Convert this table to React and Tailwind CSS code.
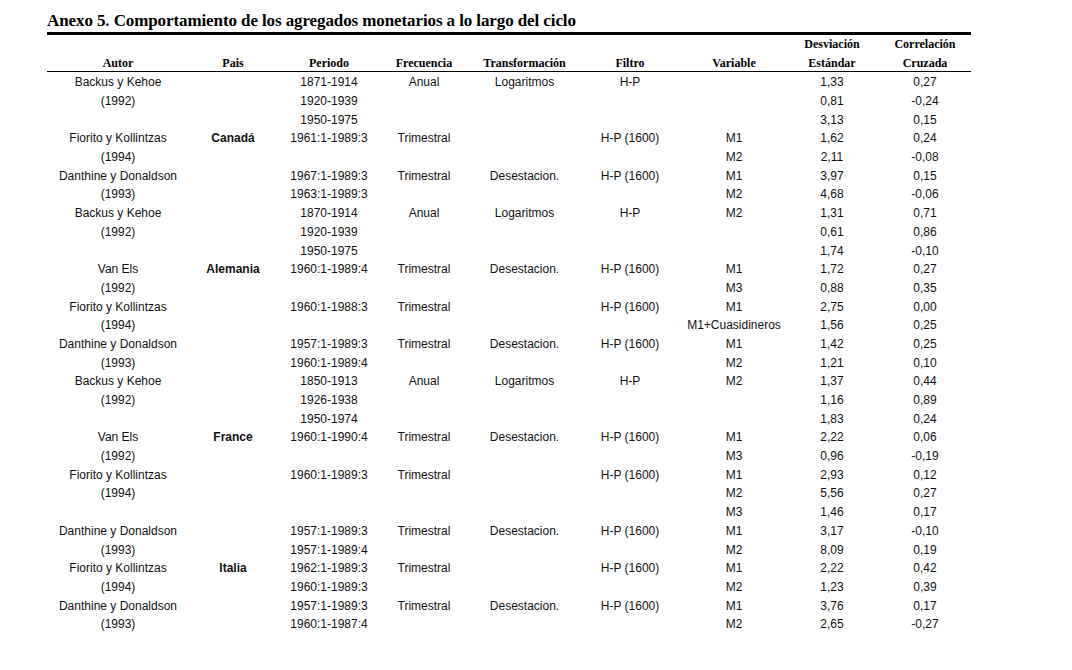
import React from "react";

const W = ["w-[142px]", "w-[88px]", "w-[104px]", "w-[86px]", "w-[115px]", "w-[96px]", "w-[112px]", "w-[84px]", "w-[102px]"];

const rows = [
  ["Backus y Kehoe", "", "1871-1914", "Anual", "Logaritmos", "H-P", "", "1,33", "0,27"],
  ["(1992)", "", "1920-1939", "", "", "", "", "0,81", "-0,24"],
  ["", "", "1950-1975", "", "", "", "", "3,13", "0,15"],
  ["Fiorito y Kollintzas", "Canadá", "1961:1-1989:3", "Trimestral", "", "H-P (1600)", "M1", "1,62", "0,24"],
  ["(1994)", "", "", "", "", "", "M2", "2,11", "-0,08"],
  ["Danthine y Donaldson", "", "1967:1-1989:3", "Trimestral", "Desestacion.", "H-P (1600)", "M1", "3,97", "0,15"],
  ["(1993)", "", "1963:1-1989:3", "", "", "", "M2", "4,68", "-0,06"],
  ["Backus y Kehoe", "", "1870-1914", "Anual", "Logaritmos", "H-P", "M2", "1,31", "0,71"],
  ["(1992)", "", "1920-1939", "", "", "", "", "0,61", "0,86"],
  ["", "", "1950-1975", "", "", "", "", "1,74", "-0,10"],
  ["Van Els", "Alemania", "1960:1-1989:4", "Trimestral", "Desestacion.", "H-P (1600)", "M1", "1,72", "0,27"],
  ["(1992)", "", "", "", "", "", "M3", "0,88", "0,35"],
  ["Fiorito y Kollintzas", "", "1960:1-1988:3", "Trimestral", "", "H-P (1600)", "M1", "2,75", "0,00"],
  ["(1994)", "", "", "", "", "", "M1+Cuasidineros", "1,56", "0,25"],
  ["Danthine y Donaldson", "", "1957:1-1989:3", "Trimestral", "Desestacion.", "H-P (1600)", "M1", "1,42", "0,25"],
  ["(1993)", "", "1960:1-1989:4", "", "", "", "M2", "1,21", "0,10"],
  ["Backus y Kehoe", "", "1850-1913", "Anual", "Logaritmos", "H-P", "M2", "1,37", "0,44"],
  ["(1992)", "", "1926-1938", "", "", "", "", "1,16", "0,89"],
  ["", "", "1950-1974", "", "", "", "", "1,83", "0,24"],
  ["Van Els", "France", "1960:1-1990:4", "Trimestral", "Desestacion.", "H-P (1600)", "M1", "2,22", "0,06"],
  ["(1992)", "", "", "", "", "", "M3", "0,96", "-0,19"],
  ["Fiorito y Kollintzas", "", "1960:1-1989:3", "Trimestral", "", "H-P (1600)", "M1", "2,93", "0,12"],
  ["(1994)", "", "", "", "", "", "M2", "5,56", "0,27"],
  ["", "", "", "", "", "", "M3", "1,46", "0,17"],
  ["Danthine y Donaldson", "", "1957:1-1989:3", "Trimestral", "Desestacion.", "H-P (1600)", "M1", "3,17", "-0,10"],
  ["(1993)", "", "1957:1-1989:4", "", "", "", "M2", "8,09", "0,19"],
  ["Fiorito y Kollintzas", "Italia", "1962:1-1989:3", "Trimestral", "", "H-P (1600)", "M1", "2,22", "0,42"],
  ["(1994)", "", "1960:1-1989:3", "", "", "", "M2", "1,23", "0,39"],
  ["Danthine y Donaldson", "", "1957:1-1989:3", "Trimestral", "Desestacion.", "H-P (1600)", "M1", "3,76", "0,17"],
  ["(1993)", "", "1960:1-1987:4", "", "", "", "M2", "2,65", "-0,27"],
];

const headTop = ["", "", "", "", "", "", "", "Desviación", "Correlación"];
const headBottom = ["Autor", "Pais", "Periodo", "Frecuencia", "Transformación", "Filtro", "Variable", "Estándar", "Cruzada"];

export default function App() {
  return (
    <div className="w-[1072px] h-[670px] bg-white text-black overflow-hidden">
      <div className="pl-[47px]">
        <div className="pt-[11px] font-['Liberation_Serif',serif] font-bold text-[17px] leading-[19px] whitespace-nowrap tracking-[-0.1px]">
          Anexo 5. Comportamiento de los agregados monetarios a lo largo del ciclo
        </div>
        <div className="mt-[2px] h-[3px] w-[924px] bg-black" />
        <div className="font-['Liberation_Serif',serif] font-bold text-[12px]">
          <div className="flex h-[18px] items-center">
            {headTop.map((t, i) => (
              <div key={i} className={`${W[i]} text-center`}>{t}</div>
            ))}
          </div>
          <div className="flex h-[18px] items-center pt-[2px]">
            {headBottom.map((t, i) => (
              <div key={i} className={`${W[i]} text-center`}>{t}</div>
            ))}
          </div>
        </div>
        <div className="h-px w-[924px] bg-black" />
        <div className="pt-[1px] font-['Liberation_Sans',Arial,sans-serif] text-[12px] text-[#111]">
          {rows.map((r, ri) => (
            <div key={ri} className="flex h-[18.69px] items-center">
              {r.map((t, i) => (
                <div key={i} className={`${W[i]} text-center whitespace-nowrap ${i === 1 ? "font-bold" : ""}`}>{t}</div>
              ))}
            </div>
          ))}
        </div>
      </div>
    </div>
  );
}
